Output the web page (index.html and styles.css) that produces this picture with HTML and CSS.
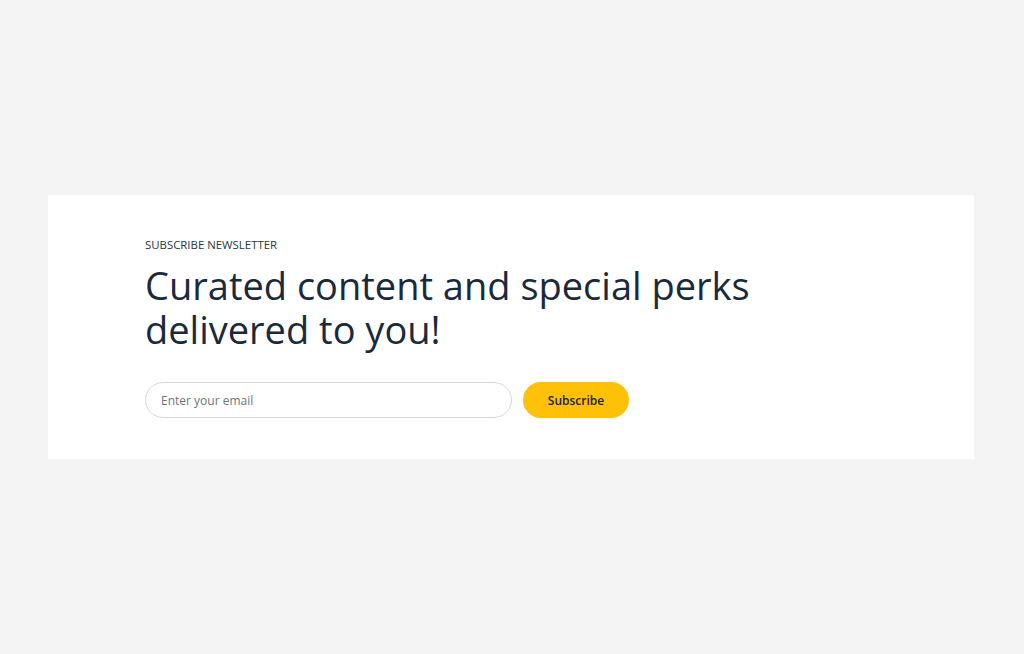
FILE: index.html
```html
<html>
  <head>
    <link rel="stylesheet" href="styles.css">
  </head>
  <body>
    <div class="newsletter">
      <div class="newsletterInner">
        <p class="eyebrow">SUBSCRIBE NEWSLETTER</p>
        <h2 class="headline">Curated content and special perks<br>delivered to you!</h2>
        <form class="subscribeForm" onsubmit="return false">
          <input class="emailInput" type="email" placeholder="Enter your email">
          <button class="subscribeBtn" type="submit">Subscribe</button>
        </form>
      </div>
    </div>
  </body>
</html>
```

FILE: styles.css
```css
html, body {
  height: 100%;
}

body {
  margin: 0;
  background-color: #f4f4f4;
  font-family: "Open Sans", "Liberation Sans", sans-serif;
  color: #1c2b3a;
  display: flex;
  align-items: center;
  justify-content: center;
}

.newsletter {
  width: 926px;
  height: 264px;
  box-sizing: border-box;
  background-color: white;
  padding: 42px 97px 0;
  margin-left: -2px;
}

.eyebrow {
  margin: 0;
  font-size: 11.4px;
  line-height: 16px;
  color: #2a3744;
}

.headline {
  margin: 10px 0 0;
  font-size: 38px;
  line-height: 44px;
  font-weight: 400;
  color: #1b2a3a;
}

.subscribeForm {
  display: flex;
  gap: 11px;
  margin-top: 31px;
}

.emailInput {
  width: 367px;
  height: 36px;
  box-sizing: border-box;
  border: solid 1px #d3d7de;
  border-radius: 18px;
  padding: 0 15px;
  font-family: inherit;
  font-size: 12px;
  outline: none;
}

.emailInput::placeholder {
  color: #6b7580;
}

.subscribeBtn {
  width: 106px;
  height: 36px;
  border: none;
  border-radius: 18px;
  background-color: #ffc107;
  color: #1c2430;
  font-family: inherit;
  font-size: 12px;
  font-weight: 600;
  cursor: pointer;
}
```
